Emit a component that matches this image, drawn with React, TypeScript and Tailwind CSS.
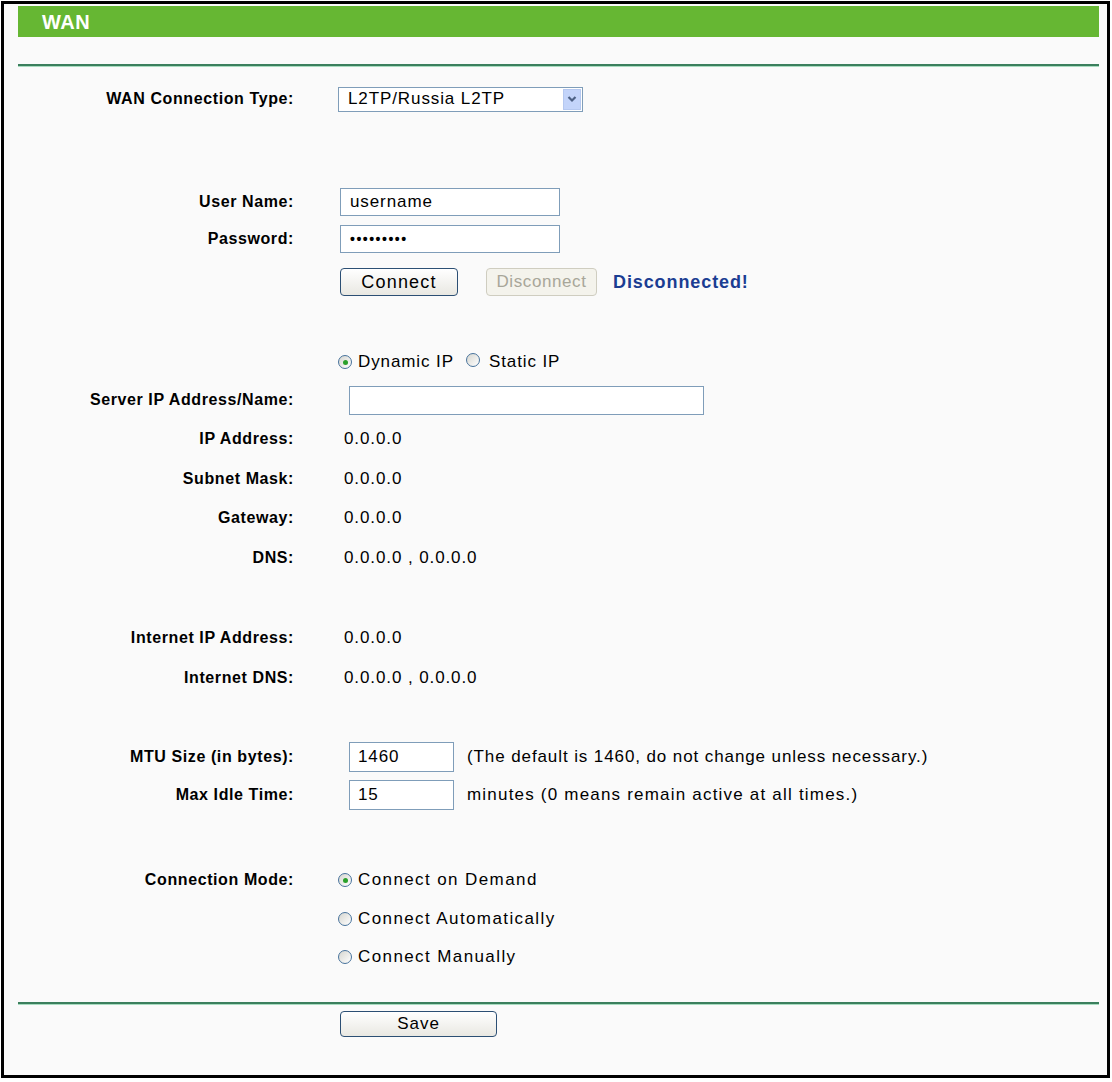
import React from "react";

const F = { fontFamily: '"Liberation Sans", Arial, sans-serif' };

function Label({ children }: { children?: React.ReactNode }) {
  return (
    <div className="w-[290px] shrink-0 text-right font-bold text-[16px] tracking-[0.6px] text-black whitespace-nowrap">{children}</div>
  );
}

function Row({ label, mt, children }: { label?: string; mt: string; children?: React.ReactNode }) {
  return (
    <div className={`flex items-center h-[30px] ${mt}`}>
      <Label>{label}</Label>
      <div className="ml-[44px] flex items-center text-[17px] tracking-[0.9px] text-black whitespace-nowrap">{children}</div>
    </div>
  );
}

function Radio({ checked }: { checked?: boolean }) {
  return (
    <span className="relative inline-flex w-[14px] h-[14px] rounded-full border border-[#48739c] bg-gradient-to-br from-[#d6d6d0] to-white items-center justify-center shrink-0">
      {checked && <span className="w-[5px] h-[5px] rounded-full bg-[#2aa02a]" />}
    </span>
  );
}

function Line() {
  return (
    <div className="ml-[14px] w-[1081px]">
      <div className="h-[2px] bg-[#3b7f5d]" />
      <div className="h-[1px] bg-[#a8dcc0]" />
    </div>
  );
}

export default function App() {
  return (
    <div className="w-[1112px] h-[1082px] bg-white pl-[1px] pt-[1px]" style={F}>
      <div className="w-[1109px] h-[1077px] border-[3px] border-black bg-[#fafafa] pt-[2px]">
        <div className="ml-[14px] w-[1081px] h-[31px] bg-[#66b733] flex items-center pl-[24px]">
          <span className="text-white font-bold text-[20px] tracking-[0.5px]">WAN</span>
        </div>
        <div className="h-[27px]" />
        <Line />

        <Row label="WAN Connection Type:" mt="mt-[17px]">
          <div className="w-[245px] h-[25px] border border-[#7f9db9] bg-white flex items-center justify-between pl-[9px] pr-[1px]">
            <span>L2TP/Russia L2TP</span>
            <span className="w-[18px] h-[21px] bg-[#c3d4fa] border border-[#b5c8f0] flex items-center justify-center">
              <svg width="10" height="8" viewBox="0 0 10 8">
                <path d="M1.5 2 L5 5.5 L8.5 2" stroke="#4d6185" strokeWidth="2.2" fill="none" />
              </svg>
            </span>
          </div>
        </Row>

        <Row label="User Name:" mt="mt-[73px]">
          <div className="ml-[2px] w-[220px] h-[28px] border border-[#7f9db9] bg-white flex items-center pl-[9px]">username</div>
        </Row>
        <Row label="Password:" mt="mt-[7px]">
          <div className="ml-[2px] w-[220px] h-[28px] border border-[#7f9db9] bg-white flex items-center pl-[9px] font-bold tracking-[1.5px] text-[14px]">•••••••••</div>
        </Row>
        <Row label="" mt="mt-[13px]">
          <div className="ml-[2px] w-[118px] h-[28px] rounded-[4px] border border-[#2c4f74] bg-gradient-to-b from-white to-[#e9e8e2] flex items-center justify-center text-[18px] tracking-[1.2px]">Connect</div>
          <div className="ml-[28px] w-[111px] h-[28px] rounded-[4px] border border-[#cfcdc0] bg-[#f4f3ec] flex items-center justify-center text-[17px] tracking-[0.6px] text-[#a8a699] overflow-hidden whitespace-nowrap">Disconnect</div>
          <span className="ml-[16px] font-bold text-[18px] tracking-[0.9px] text-[#1b3d92]">Disconnected!</span>
        </Row>

        <Row label="" mt="mt-[50px]">
          <Radio checked />
          <span className="ml-[6px]">Dynamic IP</span>
          <span className="ml-[12px]"><Radio /></span>
          <span className="ml-[9px]">Static IP</span>
        </Row>
        <Row label="Server IP Address/Name:" mt="mt-[8px]">
          <div className="ml-[11px] w-[355px] h-[29px] border border-[#7f9db9] bg-white" />
        </Row>
        <Row label="IP Address:" mt="mt-[9px]"><span className="ml-[6px]">0.0.0.0</span></Row>
        <Row label="Subnet Mask:" mt="mt-[10px]"><span className="ml-[6px]">0.0.0.0</span></Row>
        <Row label="Gateway:" mt="mt-[9px]"><span className="ml-[6px]">0.0.0.0</span></Row>
        <Row label="DNS:" mt="mt-[10px]"><span className="ml-[6px]">0.0.0.0 , 0.0.0.0</span></Row>

        <Row label="Internet IP Address:" mt="mt-[50px]"><span className="ml-[6px]">0.0.0.0</span></Row>
        <Row label="Internet DNS:" mt="mt-[10px]"><span className="ml-[6px]">0.0.0.0 , 0.0.0.0</span></Row>

        <Row label="MTU Size (in bytes):" mt="mt-[49px]">
          <div className="ml-[11px] w-[105px] h-[30px] border border-[#7f9db9] bg-white flex items-center pl-[8px]">1460</div>
          <span className="ml-[13px]">(The default is 1460, do not change unless necessary.)</span>
        </Row>
        <Row label="Max Idle Time:" mt="mt-[8px]">
          <div className="ml-[11px] w-[105px] h-[30px] border border-[#7f9db9] bg-white flex items-center pl-[8px]">15</div>
          <span className="ml-[13px] tracking-[1.2px]">minutes (0 means remain active at all times.)</span>
        </Row>

        <Row label="Connection Mode:" mt="mt-[55px]">
          <Radio checked />
          <span className="ml-[6px] tracking-[1.4px]">Connect on Demand</span>
        </Row>
        <Row label="" mt="mt-[9px]">
          <Radio />
          <span className="ml-[6px] tracking-[1.4px]">Connect Automatically</span>
        </Row>
        <Row label="" mt="mt-[8px]">
          <Radio />
          <span className="ml-[6px] tracking-[1.4px]">Connect Manually</span>
        </Row>

        <div className="h-[30px]" />
        <Line />
        <div className="flex mt-[6px]">
          <div className="w-[336px]" />
          <div className="w-[157px] h-[26px] rounded-[4px] border border-[#2c4f74] bg-gradient-to-b from-white to-[#e9e8e2] flex items-center justify-center text-[17px] tracking-[1px]">Save</div>
        </div>
      </div>
    </div>
  );
}
